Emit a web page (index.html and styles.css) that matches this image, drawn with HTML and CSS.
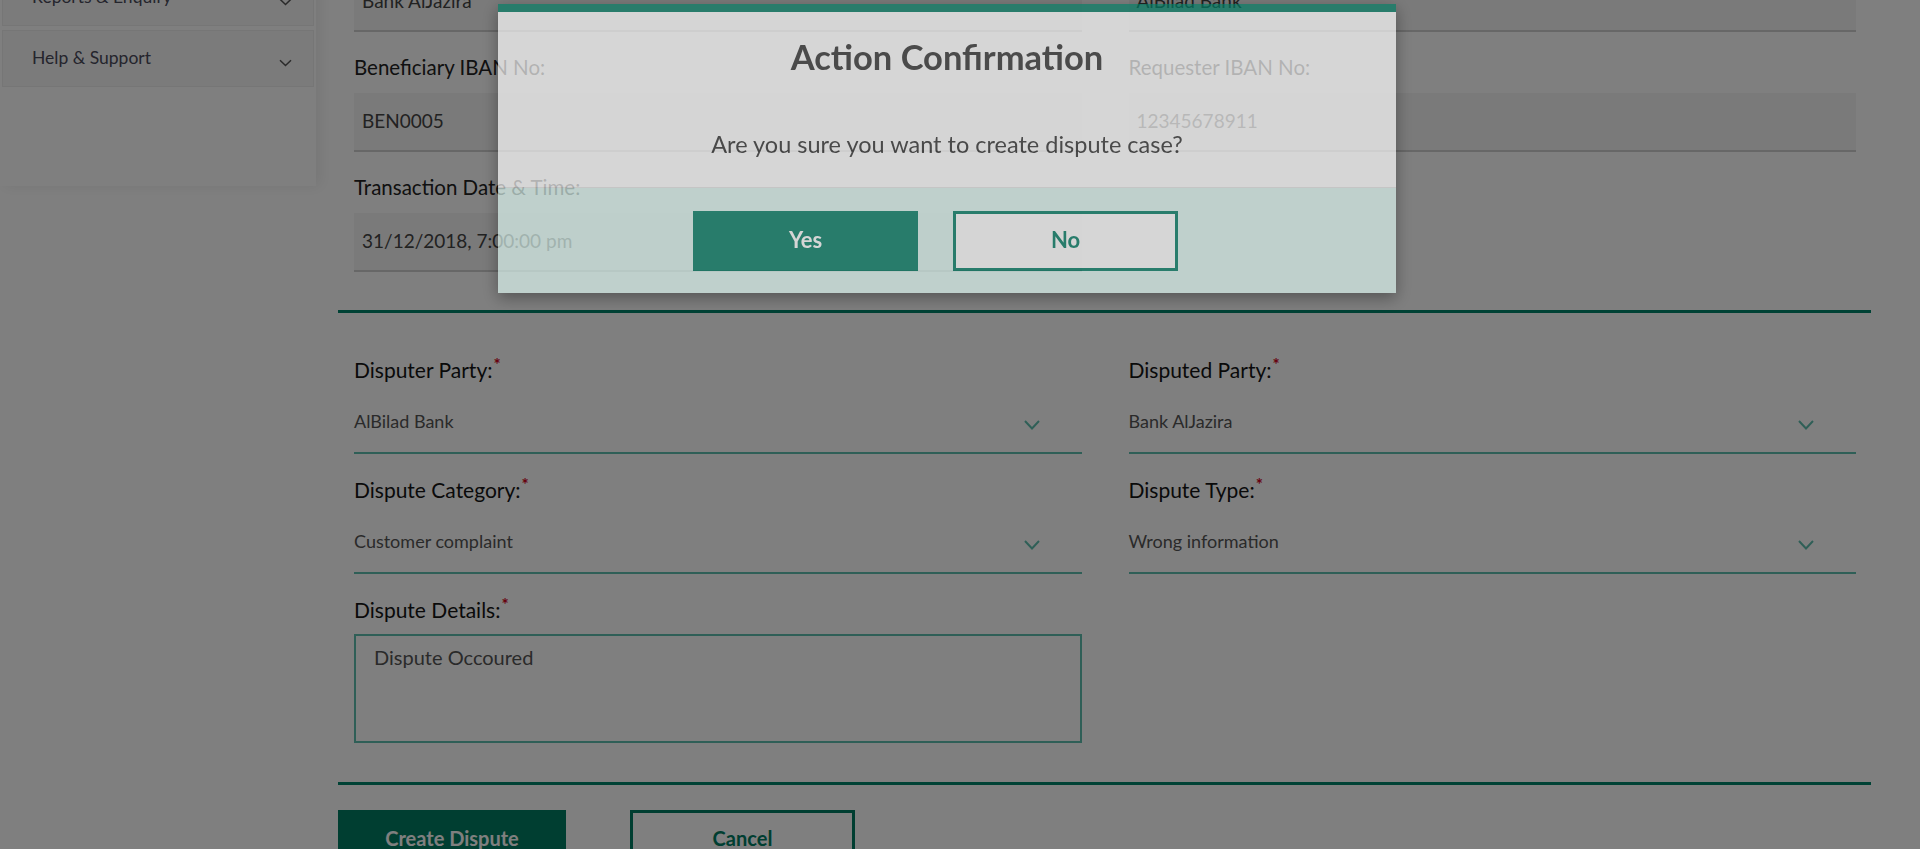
FILE: index.html
```html
<!DOCTYPE html>
<html lang="en">
<head>
<meta charset="utf-8">
<title>Create Dispute</title>
<link rel="stylesheet" href="styles.css">
</head>
<body>
<div class="page">
  <aside class="sidebar">
    <nav class="nav">
      <div class="nav-item"><span>Dashboard</span><svg class="nav-chev" width="13" height="8" viewBox="0 0 13 8"><path d="M1 1.2l5.5 5.3L12 1.2" fill="none" stroke="#555" stroke-width="1.5"/></svg></div>
      <div class="nav-item"><span>Dispute Management</span><svg class="nav-chev" width="13" height="8" viewBox="0 0 13 8"><path d="M1 1.2l5.5 5.3L12 1.2" fill="none" stroke="#555" stroke-width="1.5"/></svg></div>
      <div class="nav-item"><span>Reports &amp; Enquiry</span><svg class="nav-chev" width="13" height="8" viewBox="0 0 13 8"><path d="M1 1.2l5.5 5.3L12 1.2" fill="none" stroke="#555" stroke-width="1.5"/></svg></div>
      <div class="nav-item"><span>Help &amp; Support</span><svg class="nav-chev" width="13" height="8" viewBox="0 0 13 8"><path d="M1 1.2l5.5 5.3L12 1.2" fill="none" stroke="#555" stroke-width="1.5"/></svg></div>
    </nav>
  </aside>

  <main class="main">
    <section class="info-grid">
      <div class="field">
        <span class="label">Beneficiary Bank:</span>
        <div class="readonly">Bank AlJazira</div>
      </div>
      <div class="field">
        <span class="label">Requester Bank:</span>
        <div class="readonly">AlBilad Bank</div>
      </div>
      <div class="field">
        <span class="label">Beneficiary IBAN No:</span>
        <div class="readonly">BEN0005</div>
      </div>
      <div class="field">
        <span class="label">Requester IBAN No:</span>
        <div class="readonly">12345678911</div>
      </div>
      <div class="field">
        <span class="label">Transaction Date &amp; Time:</span>
        <div class="readonly">31/12/2018, 7:00:00 pm</div>
      </div>
    </section>

    <div class="rule"></div>

    <section class="dispute-grid">
      <div class="field">
        <span class="label label-lg">Disputer Party:<sup class="req">*</sup></span>
        <div class="select"><span>AlBilad Bank</span><svg class="select-chev" width="16" height="10" viewBox="0 0 16 10"><path d="M1 1l7 7.5L15 1" fill="none" stroke="#5fbfae" stroke-width="2"/></svg></div>
      </div>
      <div class="field">
        <span class="label label-lg">Disputed Party:<sup class="req">*</sup></span>
        <div class="select"><span>Bank AlJazira</span><svg class="select-chev" width="16" height="10" viewBox="0 0 16 10"><path d="M1 1l7 7.5L15 1" fill="none" stroke="#5fbfae" stroke-width="2"/></svg></div>
      </div>
      <div class="field">
        <span class="label label-lg">Dispute Category:<sup class="req">*</sup></span>
        <div class="select"><span>Customer complaint</span><svg class="select-chev" width="16" height="10" viewBox="0 0 16 10"><path d="M1 1l7 7.5L15 1" fill="none" stroke="#5fbfae" stroke-width="2"/></svg></div>
      </div>
      <div class="field">
        <span class="label label-lg">Dispute Type:<sup class="req">*</sup></span>
        <div class="select"><span>Wrong information</span><svg class="select-chev" width="16" height="10" viewBox="0 0 16 10"><path d="M1 1l7 7.5L15 1" fill="none" stroke="#5fbfae" stroke-width="2"/></svg></div>
      </div>
      <div class="field">
        <span class="label label-lg">Dispute Details:<sup class="req">*</sup></span>
        <div class="details">Dispute Occoured</div>
      </div>
    </section>

    <div class="rule"></div>

    <div class="actions">
      <button class="btn btn-primary" type="button">Create Dispute</button>
      <button class="btn btn-outline" type="button">Cancel</button>
    </div>
  </main>
</div>

<div class="backdrop"></div>

<div class="modal" role="dialog">
  <div class="modal-body">
    <h2 class="modal-title">Action Confirmation</h2>
    <p class="modal-text">Are you sure you want to create dispute case?</p>
  </div>
  <div class="modal-footer">
    <button class="modal-btn modal-yes" type="button">Yes</button>
    <button class="modal-btn modal-no" type="button">No</button>
  </div>
</div>
</body>
</html>
```

FILE: styles.css
```css
* { box-sizing: border-box; }

html, body {
  margin: 0;
  height: 100%;
  overflow: hidden;
}

body {
  font-family: Lato, "Liberation Sans", Arial, sans-serif;
  background: #fff;
  color: #222;
}

.page {
  display: flex;
  align-items: flex-start;
  margin-top: -163px;
}

/* Sidebar */
.sidebar {
  width: 316px;
  flex: none;
  background: #fff;
  padding: 10px 2px 99px;
  box-shadow: 4px 0 14px rgba(0, 0, 0, 0.08);
}

.nav {
  display: flex;
  flex-direction: column;
  gap: 4px;
}

.nav-item {
  height: 57px;
  display: flex;
  align-items: center;
  justify-content: space-between;
  padding: 0 21px 0 29px;
  background: #f6f6f6;
  border: 1px solid #ececec;
  font-size: 17.5px;
  color: #4a4a5a;
}

.nav-item span { margin-top: -2px; }

.nav-chev { margin-top: 8px; }

/* Main */
.main {
  width: 1533px;
  flex: none;
  margin-left: 22px;
  padding-top: 98px;
}

.info-grid,
.dispute-grid {
  display: grid;
  grid-template-columns: 1fr 1fr;
  column-gap: 47px;
  row-gap: 23px;
}

.info-grid { padding: 0 15px 38px 16px; }
.dispute-grid { padding: 44px 15px 39px 16px; }

.label {
  display: block;
  font-size: 20.5px;
  line-height: 25px;
  color: #222;
  margin-bottom: 13px;
}

.label-lg {
  font-size: 21px;
  line-height: 26px;
  margin-bottom: 11px;
  color: #151515;
}

.req {
  color: #d0021b;
  font-size: 17px;
  font-weight: 700;
  line-height: 1;
  vertical-align: top;
  position: relative;
  top: -1px;
  margin-left: 1px;
}

.readonly {
  height: 59px;
  background: #f4f4f4;
  border-bottom: 2px solid #cfcfcf;
  padding-left: 8px;
  padding-bottom: 2px;
  display: flex;
  align-items: center;
  font-size: 19px;
  color: #444;
}

.rule {
  height: 3px;
  background: #00846a;
  box-shadow: 0 8px 18px rgba(0, 0, 0, 0.05);
}

.select {
  height: 60px;
  border-bottom: 2px solid #5fbfae;
  display: flex;
  align-items: center;
  justify-content: space-between;
  padding-right: 42px;
  font-size: 18px;
  color: #555;
}

.select span { margin-top: -4px; }

.select-chev { margin-top: 4px; }

.details {
  height: 109px;
  border: 2px solid #5fbfae;
  padding: 9px 18px;
  font-size: 20px;
  line-height: 1.2;
  color: #555;
}

.actions {
  display: flex;
  gap: 64px;
  padding-top: 25px;
}

.btn {
  height: 60px;
  padding: 0 0 4px;
  font-family: Lato, "Liberation Sans", Arial, sans-serif;
  font-weight: 700;
  font-size: 20px;
  cursor: pointer;
}

.btn-primary {
  width: 228px;
  background: #007c63;
  color: #fff;
  border: none;
}

.btn-outline {
  width: 225px;
  background: #fff;
  color: #007c63;
  border: 3px solid #007c63;
}

/* Modal */
.backdrop {
  position: fixed;
  inset: 0;
  background: rgba(0, 0, 0, 0.5);
}

.modal {
  position: fixed;
  top: 4px;
  left: 498px;
  width: 898px;
  opacity: 0.68;
  background: #fff;
  border-top: 8px solid #007c63;
  box-shadow: 0 5px 15px rgba(0, 0, 0, 0.5);
}

.modal-body {
  height: 175px;
  padding-top: 24px;
  text-align: center;
}

.modal-title {
  margin: 0;
  font-size: 34.5px;
  font-weight: 700;
  line-height: 41px;
  color: #333;
}

.modal-text {
  margin: 53px 0 0;
  font-size: 23.5px;
  line-height: 28px;
  color: #333;
}

.modal-footer {
  height: 106px;
  background: #ddf6f0;
  border-top: 1px solid #e6e6e6;
  display: flex;
  align-items: center;
  justify-content: center;
  gap: 35px;
  padding-right: 23px;
}

.modal-btn {
  width: 225px;
  height: 60px;
  padding: 0 0 2px;
  font-family: Lato, "Liberation Sans", Arial, sans-serif;
  font-weight: 700;
  font-size: 22px;
  cursor: pointer;
}

.modal-yes {
  background: #007c63;
  color: #fff;
  border: none;
}

.modal-no {
  background: #fff;
  color: #007c63;
  border: 3px solid #007c63;
}
```
